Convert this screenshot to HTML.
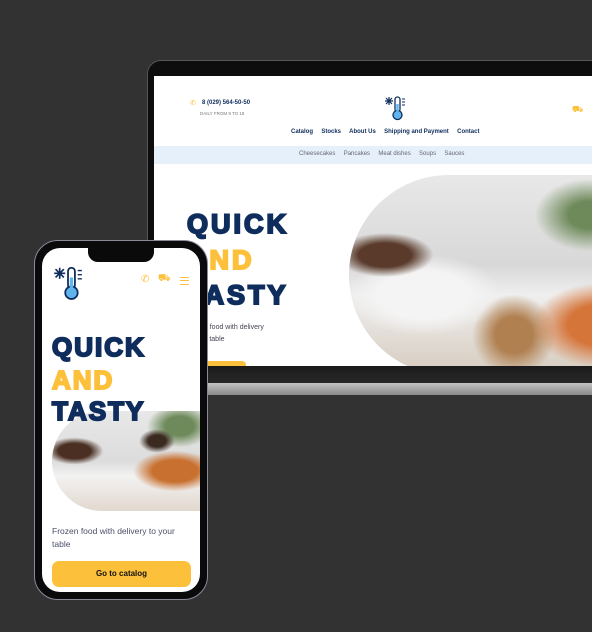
<!DOCTYPE html>
<html><head><style>
body{margin:0;width:592px;height:632px;background:#323232;position:relative;overflow:hidden;font-family:"Liberation Sans",sans-serif}
.a{position:absolute}
.h{font-weight:900;letter-spacing:3px;line-height:1;-webkit-text-stroke:2px currentColor}
.navy{color:#0f2d5c}.yel{color:#fdc03b}
</style></head><body>
<!-- laptop -->
<div class="a" style="left:147px;top:60px;width:460px;height:312px;background:#0d0d0d;border-radius:14px 0 0 6px;border:1px solid #555"></div>
<div class="a" style="left:152px;top:366px;width:450px;height:18px;background:linear-gradient(#1a1a1a,#2a2a2a)"></div>
<div class="a" style="left:152px;top:383px;width:450px;height:12px;background:linear-gradient(#c4c4c4,#8a8a8a);border-radius:0 0 0 6px"></div>
<div class="a" style="left:154px;top:76px;width:438px;height:290px;background:#fff;overflow:hidden">
 <div class="a" style="left:36px;top:23px;font-size:7px;color:#fdc03b">✆</div>
 <div class="a" style="left:48px;top:24px;font-size:6px;font-weight:bold;color:#0f2d5c">8 (029) 564-50-50</div>
 <div class="a" style="left:46px;top:35px;font-size:4.5px;color:#777">DAILY FROM 9 TO 18</div>
 <svg class="a" style="left:230px;top:19px" width="22" height="26" viewBox="0 0 22 26"><g stroke="#0f2d5c" stroke-width="1.2"><path d="M1 6h8M5 2v8M2 3l6 6M8 3l-6 6"/></g><rect x="11" y="2" width="5" height="15" rx="2.5" fill="#fff" stroke="#0f2d5c" stroke-width="1.3"/><circle cx="13.5" cy="20" r="4.5" fill="#5fb4ee" stroke="#0f2d5c" stroke-width="1.3"/><rect x="12.3" y="9" width="2.4" height="9" fill="#5fb4ee"/><path d="M18 4h3M18 7h3M18 10h3" stroke="#0f2d5c"/></svg>
 <div class="a" style="left:418px;top:28px;font-size:9px;color:#fdc03b">⛟</div>
 <div class="a" style="left:137px;top:53px;font-size:6px;font-weight:bold;color:#0f2d5c;white-space:nowrap">Catalog &nbsp;&nbsp;&nbsp; Stocks &nbsp;&nbsp;&nbsp; About Us &nbsp;&nbsp;&nbsp; Shipping and Payment &nbsp;&nbsp;&nbsp; Contact</div>
 <div class="a" style="left:0;top:70px;width:438px;height:18px;background:#e6f0fa"></div>
 <div class="a" style="left:145px;top:75px;font-size:6px;color:#667;white-space:nowrap">Cheesecakes &nbsp;&nbsp;&nbsp; Pancakes &nbsp;&nbsp;&nbsp; Meat dishes &nbsp;&nbsp;&nbsp; Soups &nbsp;&nbsp;&nbsp; Sauces</div>
 <div class="a" style="left:195px;top:99px;width:300px;height:200px;border-radius:100px 0 0 100px/100px;background:radial-gradient(ellipse at 85% 75%,#d6753a 0 10%,transparent 20%),radial-gradient(ellipse at 12% 40%,#5a3a2a 0 7%,transparent 13%),radial-gradient(ellipse at 25% 60%,#f4f4f4 0 14%,transparent 24%),radial-gradient(ellipse at 55% 80%,#b08050 0 8%,transparent 18%),radial-gradient(ellipse at 80% 20%,#6e8a5a 0 6%,transparent 16%),linear-gradient(180deg,#e8e8e8 0%,#d8d8d8 45%,#efefef 60%,#d6cbbe 100%)"></div>
 <div class="a h navy" style="left:33px;top:135px;font-size:27px">QUICK</div>
 <div class="a h yel" style="left:33px;top:171px;font-size:27px">AND</div>
 <div class="a h navy" style="left:33px;top:206px;font-size:27px">TASTY</div>
 <div class="a" style="left:32px;top:246px;font-size:7px;color:#445;line-height:12px">Frozen food with delivery<br>to your table</div>
 <div class="a" style="left:32px;top:285px;width:60px;height:14px;background:#fdc03b;border-radius:4px"></div>
</div>
<!-- phone -->
<div class="a" style="left:34px;top:240px;width:172px;height:358px;background:#0a0a0a;border-radius:24px;border:1.5px solid #8a8a9a"></div>
<div class="a" style="left:42px;top:248px;width:158px;height:344px;background:#fff;border-radius:18px;overflow:hidden">
 <div class="a" style="left:46px;top:0;width:66px;height:14px;background:#0a0a0a;border-radius:0 0 10px 10px"></div>
 <svg class="a" style="left:9px;top:17px" width="34" height="36" viewBox="0 0 22 26"><g stroke="#0f2d5c" stroke-width="1.2"><path d="M1 6h8M5 2v8M2 3l6 6M8 3l-6 6"/></g><rect x="11" y="2" width="5" height="15" rx="2.5" fill="#fff" stroke="#0f2d5c" stroke-width="1.3"/><circle cx="13.5" cy="20" r="4.5" fill="#5fb4ee" stroke="#0f2d5c" stroke-width="1.3"/><rect x="12.3" y="9" width="2.4" height="9" fill="#5fb4ee"/><path d="M18 4h3M18 7h3M18 10h3" stroke="#0f2d5c"/></svg>
 <div class="a" style="left:99px;top:26px;font-size:10px;color:#fdc03b">✆</div>
 <div class="a" style="left:116px;top:25px;font-size:10px;color:#fdc03b">⛟</div>
 <div class="a" style="left:138px;top:29px;width:9px;height:6px;border-top:1.5px solid #fdc03b;border-bottom:1.5px solid #fdc03b"></div>
 <div class="a" style="left:138px;top:31.5px;width:9px;height:1.5px;background:#fdc03b"></div>
 <div class="a" style="left:10px;top:163px;width:150px;height:100px;border-radius:50px 0 0 50px;background:radial-gradient(ellipse at 82% 60%,#c8702f 0 13%,transparent 24%),radial-gradient(ellipse at 15% 40%,#4a2f22 0 9%,transparent 16%),radial-gradient(ellipse at 70% 30%,#3a2a20 0 6%,transparent 12%),radial-gradient(ellipse at 85% 15%,#6e8a5a 0 8%,transparent 18%),linear-gradient(180deg,#e8e8e8 0%,#dcdcdc 50%,#f2f2f2 65%,#e2d8ce 100%)"></div>
 <div class="a h navy" style="left:10px;top:86px;font-size:26px;letter-spacing:2px">QUICK</div>
 <div class="a h yel" style="left:10px;top:119px;font-size:26px;letter-spacing:2px">AND</div>
 <div class="a h navy" style="left:10px;top:150px;font-size:26px;letter-spacing:2px">TASTY</div>
 <div class="a" style="left:10px;top:277px;font-size:8.5px;color:#4a4f6a;line-height:13px">Frozen food with delivery to your<br>table</div>
 <div class="a" style="left:10px;top:313px;width:139px;height:26px;background:#fdc03b;border-radius:7px;text-align:center;line-height:26px;font-size:8px;font-weight:bold;color:#111">Go to catalog</div>
</div>
</body></html>
